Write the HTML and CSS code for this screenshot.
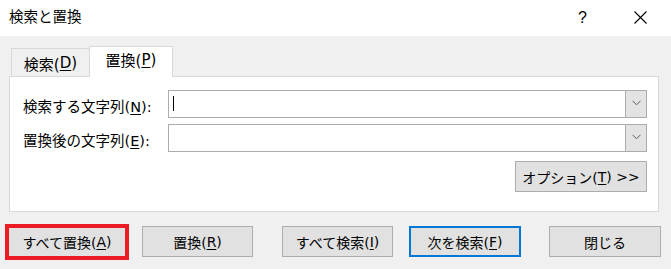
FILE: index.html
```html
<!DOCTYPE html>
<html lang="ja">
<head>
<meta charset="utf-8">
<title>検索と置換</title>
<link rel="stylesheet" href="styles.css">
</head>
<body>
<div class="dialog">
  <div class="titlebar">
    <span class="title">検索と置換</span>
    <span class="help">?</span>
    <span class="close">
      <svg width="13" height="13" viewBox="0 0 13 13"><path d="M0.5 0.5L12.5 12.5M12.5 0.5L0.5 12.5" stroke="#000" stroke-width="1.1" fill="none"/></svg>
    </span>
  </div>
  <div class="body">
    <div class="tabs">
      <div class="tab">検索(<u>D</u>)</div>
      <div class="tab tab-active">置換(<u>P</u>)</div>
    </div>
    <div class="panel">
      <div class="row">
        <label class="label">検索する文字列(<u>N</u>):</label>
        <div class="combo">
          <div class="field"><span class="caret"></span></div>
          <div class="drop"><svg width="9" height="6" viewBox="0 0 9 6"><path d="M0.5 0.8L4.5 4.8L8.5 0.8" stroke="#5a5a5a" stroke-width="1" fill="none"/></svg></div>
        </div>
      </div>
      <div class="row">
        <label class="label">置換後の文字列(<u>E</u>):</label>
        <div class="combo">
          <div class="field"></div>
          <div class="drop"><svg width="9" height="6" viewBox="0 0 9 6"><path d="M0.5 0.8L4.5 4.8L8.5 0.8" stroke="#5a5a5a" stroke-width="1" fill="none"/></svg></div>
        </div>
      </div>
      <div class="options-row">
        <button class="btn btn-options">オプション(<u>T</u>) &gt;&gt;</button>
      </div>
    </div>
    <div class="buttons">
      <button class="btn btn-all-replace">すべて置換(<u>A</u>)</button>
      <button class="btn btn-replace">置換(<u>R</u>)</button>
      <button class="btn btn-find-all">すべて検索(<u>I</u>)</button>
      <button class="btn btn-find-next">次を検索(<u>F</u>)</button>
      <button class="btn btn-close">閉じる</button>
    </div>
  </div>
</div>
</body>
</html>
```
FILE: styles.css
```css
* { box-sizing: border-box; }
html, body {
  margin: 0;
  padding: 0;
  width: 671px;
  height: 269px;
  overflow: hidden;
  background: #f0f0f0;
  font-family: "DejaVu Sans", "Noto Sans CJK JP", sans-serif;
  font-size: 14px;
  color: #000;
}
u { text-decoration: underline; text-underline-offset: 2px; text-decoration-thickness: 1px; }
.dialog { width: 671px; height: 269px; }
.titlebar {
  height: 36px;
  background: #fff;
  display: flex;
  align-items: center;
  padding-left: 9px;
}
.title { font-size: 14.5px; flex: 1; line-height: 1; margin-top: -1px; }
.help { width: 10px; margin-right: 46px; font-family: "Liberation Sans", sans-serif; font-size: 16px; line-height: 1; margin-top: -1px; }
.close { width: 13px; height: 13px; margin-right: 24px; display: flex; margin-top: -1px; }
.body { padding: 10px 0 0 0; }
.tabs {
  display: flex;
  align-items: flex-end;
  height: 30px;
  margin-left: 11px;
  position: relative;
  z-index: 1;
}
.tab {
  width: 78px;
  height: 28px;
  border: 1px solid #d9d9d9;
  border-bottom: none;
  border-right: none;
  background: #f0f0f0;
  display: flex;
  align-items: center;
  justify-content: center;
  padding-top: 1px;
  font-size: 15px;
}
.tab-active {
  width: 84px;
  height: 31px;
  margin-bottom: -1px;
  background: #fff;
  border-right: 1px solid #d9d9d9;
  padding-top: 0;
  padding-bottom: 5px;
}
.panel {
  margin-left: 9px;
  width: 650px;
  height: 136px;
  background: #fff;
  border: 1px solid #d9d9d9;
  padding: 13px 11px 0 13px;
}
.row {
  display: flex;
  align-items: center;
  height: 28px;
  margin-bottom: 6px;
}
.label { width: 145px; padding-top: 3px; font-size: 14.5px; }
.combo {
  flex: 1;
  height: 28px;
  display: flex;
  border: 1px solid #acacac;
  background: #fff;
}
.field { flex: 1; display: flex; align-items: center; padding-left: 4px; }
.caret { width: 1px; height: 15px; background: #000; margin-top: -2px; }
.drop {
  width: 21px;
  background: #e3e3e3;
  border-left: 1px solid #acacac;
  display: flex;
  align-items: center;
  justify-content: center;
}
.drop svg { margin-top: -2px; }
.options-row { display: flex; justify-content: flex-end; margin-top: 9px; }
.btn {
  font-family: inherit;
  font-size: 14px;
  color: #000;
  background: #e1e1e1;
  border: 1px solid #adadad;
  height: 31px;
  padding: 0;
  margin: 0;
  display: flex;
  align-items: center;
  justify-content: center;
}
.btn-options { width: 132px; }
.buttons {
  display: flex;
  align-items: center;
  padding-left: 9px;
  margin-top: 14px;
}
.btn-all-replace {
  width: 116px;
  height: 28px;
  border: none;
  outline: 4px solid #ed1c24;
}
.btn-replace { width: 111px; margin-left: 17px; }
.btn-find-all { width: 111px; margin-left: 29px; }
.btn-find-next { width: 112px; margin-left: 16px; border: 2px solid #0078d7; }
.btn-close { width: 112px; margin-left: 28px; }
```
